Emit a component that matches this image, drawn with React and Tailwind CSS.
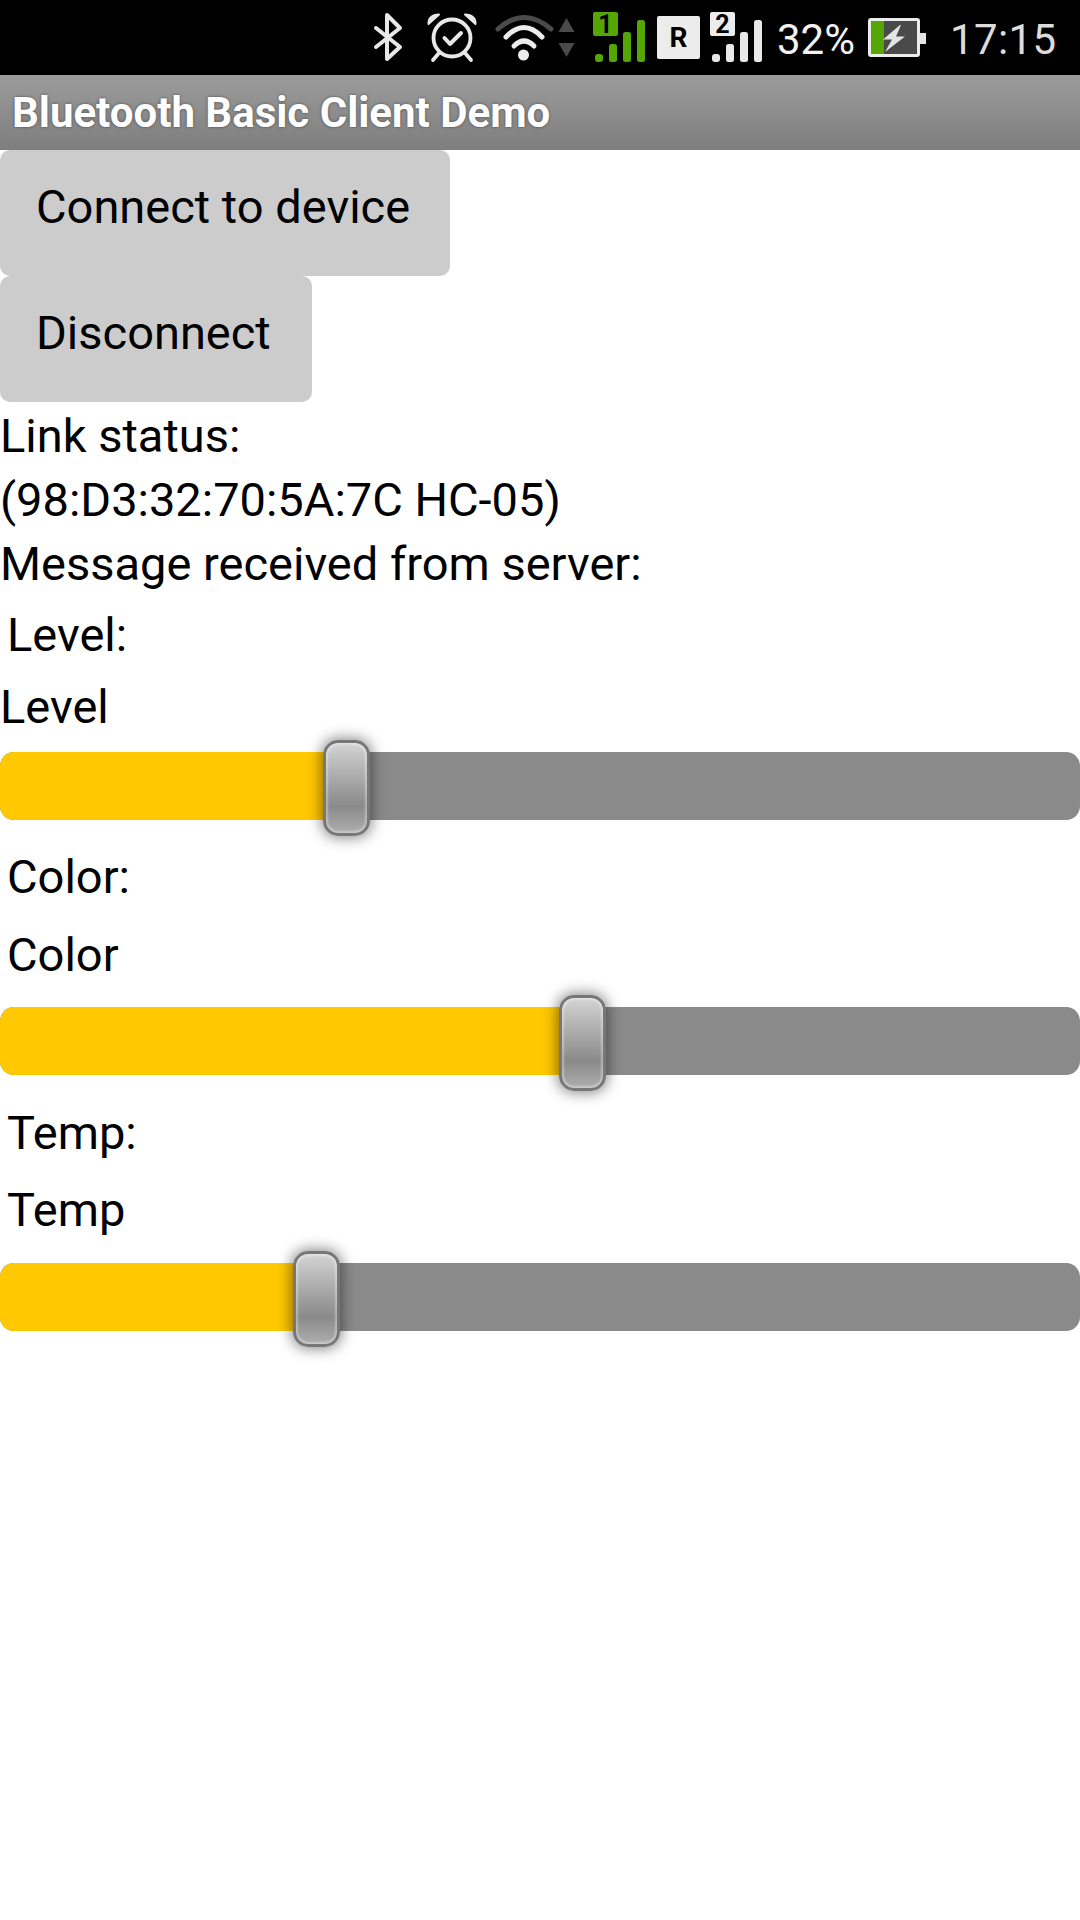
import React from "react";

const font = { fontFamily: "Roboto, sans-serif" };

function Bars({ color, badge, badgeBg }) {
  return (
    <div className="relative w-[56px] h-[75px] shrink-0">
      <svg width="56" height="75" viewBox="0 0 56 75" className="block">
        <rect x="3" y="54" width="8" height="8" rx="3" fill={color} />
        <rect x="17" y="44" width="8" height="18" rx="2.5" fill={color} />
        <rect x="31" y="32" width="8" height="30" rx="2.5" fill={color} />
        <rect x="45" y="20" width="8" height="42" rx="2.5" fill={color} />
      </svg>
      <div className={`absolute left-[1px] top-[12px] w-[25px] h-[24px] rounded-[2px] ${badgeBg} text-black font-bold text-[25px] leading-[25px] text-center`}>
        {badge}
      </div>
    </div>
  );
}

function StatusBar() {
  return (
    <div className="h-[75px] bg-black flex items-start pl-[371px] overflow-hidden">
      {/* Bluetooth */}
      <svg className="shrink-0" width="34" height="75" viewBox="371 0 34 75" fill="none" stroke="#e8e8e8" strokeWidth="4" strokeLinecap="round" strokeLinejoin="round">
        <path d="M376 28 L400 47 L387 59 V15 L400 28 L376 47" />
      </svg>
      {/* Alarm */}
      <svg className="shrink-0 ml-[20px]" width="54" height="75" viewBox="425 0 54 75" fill="none" stroke="#e8e8e8" strokeWidth="3.8" strokeLinecap="round" strokeLinejoin="round">
        <circle cx="452" cy="38" r="18.5" />
        <path d="M428.5 24 Q428 15 439 14.5 Z" fill="#e8e8e8" strokeWidth="2" />
        <path d="M475.5 24 Q476 15 465 14.5 Z" fill="#e8e8e8" strokeWidth="2" />
        <path d="M439 53 L433 60 M465 53 L471 60" />
        <path d="M444.5 38 L450 44 L461 33" strokeWidth="4" />
      </svg>
      {/* Wifi */}
      <svg className="shrink-0 ml-[14px]" width="62" height="75" viewBox="493 0 62 75" fill="none" strokeLinecap="round">
        <path d="M498 29 Q524 6 551 29" stroke="#4a4a4a" strokeWidth="5" />
        <path d="M506 37 Q524 18 542 37" stroke="#ececec" strokeWidth="5" />
        <path d="M514 46 Q524 36 534 46" stroke="#ececec" strokeWidth="5" />
        <circle cx="523.5" cy="55" r="5.5" fill="#ececec" />
      </svg>
      {/* Up/down */}
      <svg className="shrink-0 ml-[2px]" width="20" height="75" viewBox="557 0 20 75">
        <path d="M566.5 18 L574.5 32 H558.5 Z" fill="#4a4a4a" />
        <path d="M558.5 43 H574.5 L566.5 57 Z" fill="#4a4a4a" />
      </svg>
      <div className="ml-[15px]">
        <Bars color="#55a605" badge="1" badgeBg="bg-[#55a605]" />
      </div>
      {/* R */}
      <div className="shrink-0 ml-[9px] mt-[16px] w-[43px] h-[43px] rounded-[2px] bg-[#ececec] text-black font-bold text-[28px] leading-[43px] text-center">R</div>
      <div className="ml-[9px]">
        <Bars color="#e8e8e8" badge="2" badgeBg="bg-[#ececec]" />
      </div>
      {/* 32% */}
      <div className="shrink-0 w-[91px] ml-[12px] pt-[2px] text-[#f2f2f2] text-[42px] leading-[75px]">32%</div>
      {/* Battery */}
      <svg className="shrink-0" width="60" height="75" viewBox="868 0 60 75">
        <rect x="869.5" y="19.5" width="49" height="36" rx="1.5" fill="#4a4a4a" stroke="#ececec" strokeWidth="3" />
        <rect x="871" y="21" width="13" height="33" fill="#55a605" />
        <rect x="920" y="33" width="6" height="11" fill="#e4e4e4" />
        <path d="M900 25 L883 39.5 H892 L885 52 L905 36.5 H896 L901 25 Z" fill="#e4e4e4" />
      </svg>
      {/* Time */}
      <div className="shrink-0 ml-[22px] pt-[2px] text-[#dcdcdc] text-[42px] leading-[75px] tracking-[0.4px]">17:15</div>
    </div>
  );
}

function Btn({ children, w }) {
  return (
    <div className={`${w} h-[126px] bg-[#cccccc] rounded-[10px] pl-[36px] pt-[28px] text-[47px] leading-[58px] text-black`}>
      {children}
    </div>
  );
}

function Slider({ pct, left, mt }) {
  return (
    <div className={`relative h-[68px] ${mt} bg-[#8a8a8a] rounded-[14px]`}>
      <div className="h-full bg-[#ffc800] rounded-l-[14px]" style={{ width: pct }} />
      <div
        className="absolute top-[-12px] w-[47px] h-[96px] rounded-[15px] border-[3px] border-[#777777] bg-gradient-to-b from-[#d4d4d4] via-[#8a8a8a] via-70% to-[#aeaeae] shadow-[0_0_14px_2px_rgba(0,0,0,0.45),inset_0_0_2px_2px_rgba(255,255,255,0.35)]"
        style={{ left }}
      />
    </div>
  );
}

export default function App() {
  return (
    <div className="w-[1080px] h-[1920px] bg-white overflow-hidden text-black" style={font}>
      <StatusBar />
      <div className="h-[75px] bg-gradient-to-b from-[#9c9c9c] to-[#7e7e7e] pl-[12px] flex items-center">
        <span className="text-white font-bold text-[42px] leading-[46px] [text-shadow:0_0_3px_rgba(0,0,0,0.5)]">
          Bluetooth Basic Client Demo
        </span>
      </div>
      <Btn w="w-[450px]">Connect to device</Btn>
      <Btn w="w-[312px]">Disconnect</Btn>
      <div className="text-[47px] leading-[64px] pt-[2px]">
        <div>Link status:</div>
        <div>(98:D3:32:70:5A:7C HC-05)</div>
        <div>Message received from server:</div>
      </div>
      <div className="text-[47px] leading-[64px] pl-[7px] mt-[7px]">Level:</div>
      <div className="text-[47px] leading-[64px] mt-[8px]">Level</div>
      <Slider pct="346px" left="323px" mt="mt-[13px]" />
      <div className="text-[47px] leading-[64px] pl-[7px] mt-[25px]">Color:</div>
      <div className="text-[47px] leading-[64px] pl-[7px] mt-[14px]">Color</div>
      <Slider pct="582px" left="559px" mt="mt-[20px]" />
      <div className="text-[47px] leading-[64px] pl-[7px] mt-[26px]">Temp:</div>
      <div className="text-[47px] leading-[64px] pl-[7px] mt-[13px]">Temp</div>
      <Slider pct="316px" left="293px" mt="mt-[21px]" />
    </div>
  );
}
